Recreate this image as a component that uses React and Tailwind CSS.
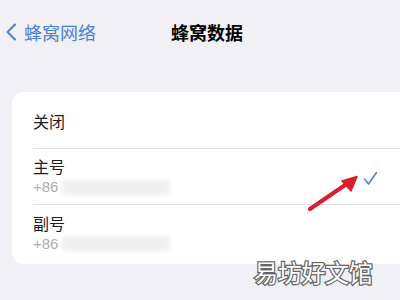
import React from 'react';

const font = { fontFamily: '"Noto Sans CJK SC", "Noto Sans", sans-serif' };

function SimRow({ label }) {
  return (
    <div className="flex flex-col">
      <span className="text-[16px] leading-[20px] text-[#1c1c1e]">{label}</span>
      <div className="flex items-center gap-[4px] mt-[1px]">
        <span className="text-[15px] leading-[20px] text-[#aeaeb2]" style={{ fontFamily: '"Liberation Sans", sans-serif' }}>+86</span>
        <div className="h-[15px] w-[108px] rounded-[4px] bg-[#efeff2] blur-[2px]" />
      </div>
    </div>
  );
}

export default function App() {
  return (
    <div className="w-[400px] h-[300px] overflow-hidden bg-[#f0f0f5] relative" style={font}>
      <div className="flex items-center h-[30px] mt-[17px] relative">
        <div className="flex items-center pl-[5px] text-[#4a82d0]">
          <svg width="12" height="18" viewBox="0 0 12 18" fill="none">
            <path d="M10 1.5L2.5 9L10 16.5" stroke="currentColor" strokeWidth="2" strokeLinecap="round" strokeLinejoin="round" />
          </svg>
          <span className="ml-[7px] text-[18px] leading-[20px]">蜂窝网络</span>
        </div>
        <span className="absolute left-[171px] text-[18px] leading-[20px] font-bold text-black">蜂窝数据</span>
      </div>

      <div className="ml-[12px] mt-[45px] w-[410px] bg-white rounded-[11px] pl-[21px]">
        <div className="h-[57px] flex items-center border-b border-[#e3e3e6]">
          <span className="text-[16px] leading-[20px] text-[#1c1c1e] pt-[1px]">关闭</span>
        </div>
        <div className="h-[56px] flex items-center border-b border-[#e3e3e6] relative">
          <SimRow label="主号" />
          <svg className="absolute left-[330px] top-[22px]" width="15" height="15" viewBox="0 0 15 15" fill="none">
            <path d="M1.5 8L5.5 13L13.5 1.5" stroke="#5a85c6" strokeWidth="1.6" strokeLinecap="round" strokeLinejoin="round" />
          </svg>
        </div>
        <div className="h-[59px] flex items-center pb-[3px]">
          <SimRow label="副号" />
        </div>
      </div>

      <svg className="absolute left-[305px] top-[170px]" width="60" height="45" viewBox="0 0 60 45" fill="none">
        <path d="M5 39L43 13" stroke="#d8202a" strokeWidth="4" strokeLinecap="round" />
        <path d="M52 6.5L37 11L46 21Z" fill="#d8202a" stroke="#d8202a" strokeWidth="1.5" strokeLinejoin="round" />
      </svg>

      <span
        className="absolute left-[254px] top-[257px] text-[24px] leading-[30px] text-white tracking-[-0.3px]"
        style={{ WebkitTextStroke: '2.5px #666666', paintOrder: 'stroke fill' }}
      >
        易坊好文馆
      </span>
    </div>
  );
}
